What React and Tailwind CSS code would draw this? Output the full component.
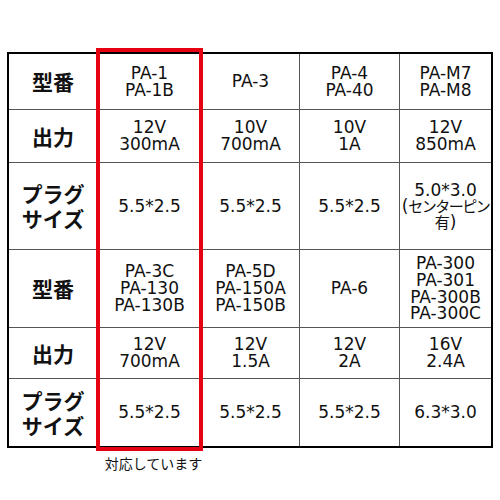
import React from 'react';

// 対応機種の表。左端が項目名、赤枠の列が対応品
const rows = [
  { label: ['型番'], h: 'h-[56px]', cells: [['PA-1', 'PA-1B'], ['PA-3'], ['PA-4', 'PA-40'], ['PA-M7', 'PA-M8']] },
  { label: ['出力'], h: 'h-[53px]', cells: [['12V', '300mA'], ['10V', '700mA'], ['10V', '1A'], ['12V', '850mA']] },
  { label: ['プラグ', 'サイズ'], h: 'h-[87px]', cells: [['5.5*2.5'], ['5.5*2.5'], ['5.5*2.5'], 'center'] },
  { label: ['型番'], h: 'h-[78px]', cells: [['PA-3C', 'PA-130', 'PA-130B'], ['PA-5D', 'PA-150A', 'PA-150B'], ['PA-6'], ['PA-300', 'PA-301', 'PA-300B', 'PA-300C']] },
  { label: ['出力'], h: 'h-[51px]', cells: [['12V', '700mA'], ['12V', '1.5A'], ['12V', '2A'], ['16V', '2.4A']] },
  { label: ['プラグ', 'サイズ'], h: 'h-[67px]', cells: [['5.5*2.5'], ['5.5*2.5'], ['5.5*2.5'], ['6.3*3.0']] },
];

const font = { fontFamily: '"DejaVu Sans", "Noto Sans CJK JP", sans-serif' };

const CenterPin = () => (
  <div className="flex flex-col items-center leading-[16px]">
    <span className="text-[17px]">5.0*3.0</span>
    <span className="text-[17px] whitespace-nowrap">
      (<span className="text-[15px] tracking-[-1.5px]" style={{ fontFamily: '"Noto Sans CJK JP", sans-serif' }}>センターピン</span>
    </span>
    <span className="text-[17px]">
      <span className="text-[15px]" style={{ fontFamily: '"Noto Sans CJK JP", sans-serif' }}>有</span>)
    </span>
  </div>
);

const Cell = ({ value, last, bottom, h }) => (
  <div
    className={`${h} flex items-center justify-center text-center border-[#555] ${last ? '' : 'border-r'} ${bottom ? '' : 'border-b'}`}
  >
    {value === 'center' ? (
      <CenterPin />
    ) : (
      <div className="flex flex-col items-center text-[17px] leading-[16.7px] text-[#111]">
        {value.map((line) => (
          <span key={line}>{line}</span>
        ))}
      </div>
    )}
  </div>
);

export default function App() {
  return (
    <div className="w-[500px] h-[500px] bg-white pl-[7px] pt-[52px] text-[#111]" style={font}>
      <div className="relative w-[486px]">
        <div className="border-2 border-black grid grid-cols-[89px_104px_98px_100px_91px]">
          {rows.map((row, ri) => {
            const bottom = ri === rows.length - 1;
            return (
              <React.Fragment key={ri}>
                <div
                  className={`${row.h} flex items-center justify-center border-r border-[#555] ${bottom ? '' : 'border-b'}`}
                >
                  <div
                    className="flex flex-col items-center text-[21px] font-bold leading-[25px]"
                    style={{ fontFamily: '"Noto Sans CJK JP", sans-serif' }}
                  >
                    {row.label.map((l) => (
                      <span key={l}>{l}</span>
                    ))}
                  </div>
                </div>
                {row.cells.map((c, ci) => (
                  <Cell key={ci} value={c} last={ci === 3} bottom={bottom} h={row.h} />
                ))}
              </React.Fragment>
            );
          })}
        </div>
        {/* 対応列の赤枠 */}
        <div className="absolute left-[89px] top-[-4px] w-[107px] h-[403px] border-4 border-[#e50012] pointer-events-none" />
      </div>
      <div
        className="ml-[93px] w-[107px] mt-[6px] text-center text-[14px] leading-[18px] whitespace-nowrap"
        style={{ fontFamily: '"Noto Sans CJK JP", sans-serif' }}
      >
        対応しています
      </div>
    </div>
  );
}
